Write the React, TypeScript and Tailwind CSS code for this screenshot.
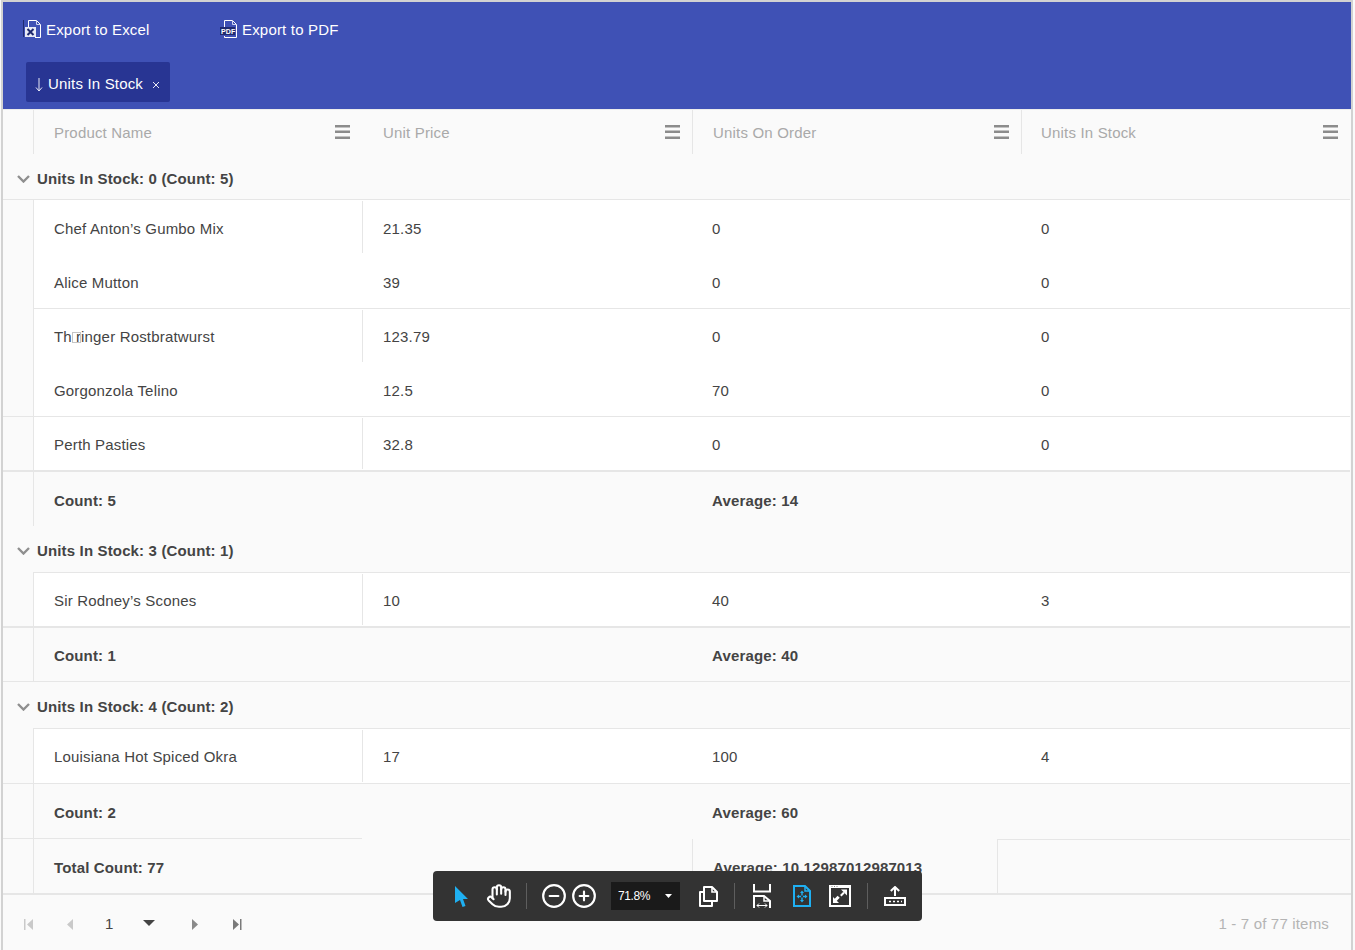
import React from "react";
import { Hand, CircleMinus, CirclePlus } from "lucide-react";

const GRID = "grid grid-cols-[30px_329px_330px_329px_329px] w-[1347px]";

function MenuIcon() {
  return (
    <svg width="15" height="14" viewBox="0 0 15 14" className="shrink-0">
      <rect x="0" y="0" width="15" height="2.5" fill="#8c8c8c" />
      <rect x="0" y="5.5" width="15" height="2.5" fill="#8c8c8c" />
      <rect x="0" y="11.5" width="15" height="2.5" fill="#8c8c8c" />
    </svg>
  );
}

function HeaderCell({ label, border, last }: { label: string; border?: boolean; last?: boolean }) {
  return (
    <div className={`relative flex items-center justify-between h-[44px] ${last ? "pl-[19px]" : "pl-5"} pr-[12px] ${border ? "border-l border-[#e6e6e6]" : "border-l border-transparent"}`}>
      <span className="text-[15px] tracking-[0.18px] text-[#a9a9a9] pt-[2px]">{label}</span>
      <MenuIcon />
    </div>
  );
}

function Header() {
  return (
    <div className="h-[46px] bg-[#fafafa] border-t border-[#ececec]">
      <div className={GRID}>
        <div />
        <HeaderCell label="Product Name" border />
        <HeaderCell label="Unit Price" />
        <HeaderCell label="Units On Order" border />
        <HeaderCell label="Units In Stock" border last />
      </div>
    </div>
  );
}

function Chevron() {
  return (
    <svg width="13" height="8" viewBox="0 0 13 8" className="shrink-0 mb-[2px]">
      <polyline points="1,1 6.5,6.5 12,1" fill="none" stroke="#8f8f8f" strokeWidth="2.4" />
    </svg>
  );
}

function GroupRow({ label, h, line }: { label: string; h: string; line: "full" | "inner" }) {
  return (
    <div className={`${h} flex flex-col bg-[#fafafa]`}>
      <div className="flex-1 flex items-center pl-[14px] gap-[7px] pt-[5px]">
        <Chevron />
        <span className="text-[15px] font-bold tracking-[0.15px] text-[#444444]">{label}</span>
      </div>
      <div className={`h-px bg-[#e6e6e6] ${line === "inner" ? "ml-[30px] w-[1317px]" : "w-[1347px]"}`} />
    </div>
  );
}

type RowProps = {
  name: React.ReactNode;
  price: string;
  order: string;
  stock: string;
  divider?: boolean;
  tight?: boolean;
  h: string;
  bottom?: "none" | "inner" | "full" | "thick";
};

function DataRow({ name, price, order, stock, divider, tight, h, bottom = "none" }: RowProps) {
  const pad = tight ? "pt-[2px]" : "pt-[4px]";
  return (
    <div className={`${h} flex flex-col`}>
      <div className={`${GRID} flex-1 min-h-0 text-[15px] tracking-[0.18px] text-[#444444]`}>
        <div className="bg-[#fafafa]" />
        <div className={`bg-white border-l border-[#e6e6e6] pl-5 ${pad} flex items-center`}>{name}</div>
        <div className="bg-white flex">
          <div className={`my-px flex-1 flex items-center pl-5 ${pad} border-l ${divider ? "border-[#e6e6e6]" : "border-transparent"}`}>{price}</div>
        </div>
        <div className={`bg-white pl-5 ${pad} flex items-center`}>{order}</div>
        <div className={`bg-white pl-5 ${pad} flex items-center`}>{stock}</div>
      </div>
      {bottom === "inner" && <div className="h-px ml-[30px] w-[1317px] bg-[#e6e6e6]" />}
      {bottom === "full" && <div className="h-px w-[1347px] bg-[#e6e6e6]" />}
      {bottom === "thick" && <div className="h-[2px] w-[1347px] bg-[#e6e6e6]" />}
    </div>
  );
}

function SummaryRow({ count, avg, h, bottom }: { count: string; avg: string; h: string; bottom?: "full" | "short" }) {
  return (
    <div className={`${h} flex flex-col bg-[#fafafa]`}>
      <div className={`${GRID} flex-1 min-h-0 text-[15px] font-bold tracking-[0.15px] text-[#444444]`}>
        <div />
        <div className="border-l border-[#e6e6e6] pl-5 pt-[4px] flex items-center">{count}</div>
        <div />
        <div className="pl-5 pt-[4px] flex items-center">{avg}</div>
        <div />
      </div>
      {bottom === "full" && <div className="h-px w-[1347px] bg-[#e6e6e6]" />}
      {bottom === "short" && <div className="h-px w-[359px] bg-[#e6e6e6]" />}
    </div>
  );
}

function TotalRow() {
  return (
    <div className="h-[54px] bg-[#fafafa]">
      <div className={`${GRID} h-full text-[15px] font-bold tracking-[0.15px] text-[#444444]`}>
        <div />
        <div className="border-l border-[#e6e6e6] pl-5 pt-[4px] flex items-center">Total Count: 77</div>
        <div />
        <div className="col-span-2 flex">
          <div className="w-[305px] border-l border-[#e6e6e6] pl-5 pt-[4px] flex items-center">Average: 10.12987012987013</div>
          <div className="flex-1 border-l border-t border-[#e6e6e6]" />
        </div>
      </div>
    </div>
  );
}

function ExcelIcon() {
  return (
    <svg width="19" height="19" viewBox="0 0 19 19" className="shrink-0 -mt-[2px]">
      <path d="M0.5 0V17" stroke="#1f2a70" strokeWidth="1" />
      <path d="M5.5 7V0.5H13.5L17.5 4.5V17.5H12" fill="none" stroke="#ffffff" strokeWidth="1" />
      <path d="M13.5 0.5V4.5H17.5" fill="none" stroke="#cfd4ee" strokeWidth="1" />
      <rect x="2" y="7" width="11" height="10" fill="#e8eaf6" />
      <path d="M4.5 9L10.5 15M10.5 9L4.5 15" stroke="#1f2a70" strokeWidth="2" />
    </svg>
  );
}

function PdfIcon() {
  return (
    <svg width="18" height="19" viewBox="0 0 18 19" className="shrink-0 -mt-[2px]">
      <path d="M4.5 7V0.5H12.5L16.5 4.5V17.5H4.5V16" fill="none" stroke="#ffffff" strokeWidth="1" />
      <path d="M12.5 0.5V4.5H16.5" fill="none" stroke="#cfd4ee" strokeWidth="1" />
      <rect x="0" y="7" width="15" height="8" fill="#1f2a70" />
      <text x="1" y="14" fontSize="7" fontWeight="700" fill="#ffffff" fontFamily="Liberation Sans, sans-serif">PDF</text>
    </svg>
  );
}

function TopBar() {
  return (
    <div className="h-[107px] bg-[#3f51b5] text-white text-[15px] tracking-[0.18px]">
      <div className="h-[54px] flex items-center pt-[2px]">
        <div className="flex items-center gap-[4px] ml-[20px] w-[197px]">
          <ExcelIcon />
          <span>Export to Excel</span>
        </div>
        <div className="flex items-center gap-[4px]">
          <PdfIcon />
          <span>Export to PDF</span>
        </div>
      </div>
      <div className="mt-[6px] ml-[23px] w-[144px] h-[40px] rounded-[2px] bg-[#283593] flex items-center pl-[9px] pt-[4px]">
        <svg width="8" height="14" viewBox="0 0 8 14" className="shrink-0 mt-[2px]">
          <path d="M4 0V13M1 9.5L4 13L7 9.5" fill="none" stroke="#e8eaf6" strokeWidth="1" />
        </svg>
        <span className="ml-[5px]">Units In Stock</span>
        <svg width="8" height="8" viewBox="0 0 8 8" className="ml-[9px] mt-[1px]">
          <path d="M1 1L7 7M7 1L1 7" stroke="#e8eaf6" strokeWidth="1" />
        </svg>
      </div>
    </div>
  );
}

function Tri({ dir, color }: { dir: "l" | "r"; color: string }) {
  return (
    <svg width="6" height="11" viewBox="0 0 6 11" className="shrink-0">
      <polygon points={dir === "l" ? "6,0 6,11 0,5.5" : "0,0 0,11 6,5.5"} fill={color} />
    </svg>
  );
}

function Footer() {
  return (
    <div className="h-[55px] bg-[#fafafa] flex items-center pt-[3px] text-[15px]">
      <svg width="9" height="11" viewBox="0 0 9 11" className="ml-[21px] shrink-0">
        <rect x="0" y="0" width="1.5" height="11" fill="#c9c9c9" />
        <polygon points="9,0 9,11 3,5.5" fill="#c9c9c9" />
      </svg>
      <div className="ml-[34px]"><Tri dir="l" color="#c9c9c9" /></div>
      <span className="ml-[32px] w-[7px] text-[#444444] text-[15px]">1</span>
      <svg width="12" height="6" viewBox="0 0 12 6" className="ml-[31px] mb-[3px] shrink-0">
        <polygon points="0,0 12,0 6,6" fill="#444444" />
      </svg>
      <div className="ml-[37px]"><Tri dir="r" color="#8a8a8a" /></div>
      <svg width="9" height="11" viewBox="0 0 9 11" className="ml-[35px] shrink-0">
        <polygon points="0,0 0,11 6,5.5" fill="#7a7a7a" />
        <rect x="7" y="0" width="1.5" height="11" fill="#7a7a7a" />
      </svg>
      <span className="ml-auto mr-[22px] tracking-[0.18px] text-[#b4b4b4]">1 - 7 of 77 items</span>
    </div>
  );
}

function Divider({ ml }: { ml: string }) {
  return <div className={`${ml} w-px h-[26px] bg-[#5e5e5e] shrink-0`} />;
}

function PdfToolbar() {
  return (
    <div className="absolute left-[433px] top-[871px] w-[489px] h-[50px] rounded-[4px] bg-[#333333] flex items-center">
      <svg width="14" height="21" viewBox="0 0 14 21" className="ml-[21px] shrink-0">
        <polygon points="1,0 14,13 9,13 11.5,20 8.5,21 6,14 1,17" fill="#1fb0f2" />
      </svg>
      <Hand size={26} color="#ffffff" strokeWidth={1.9} className="ml-[18px] shrink-0" />
      <Divider ml="ml-[14px]" />
      <CircleMinus size={26} color="#ffffff" strokeWidth={2} className="ml-[14px] shrink-0" />
      <CirclePlus size={26} color="#ffffff" strokeWidth={2} className="ml-[4px] shrink-0" />
      <div className="ml-[14px] w-[69px] h-[28px] bg-[#1a1a1a] flex items-center pl-[7px] shrink-0">
        <span className="text-[12px] tracking-[-0.4px] text-white w-[47px]">71.8%</span>
        <svg width="7" height="4" viewBox="0 0 7 4">
          <polygon points="0,0 7,0 3.5,4" fill="#ffffff" />
        </svg>
      </div>
      <svg width="19" height="21" viewBox="0 0 19 21" className="ml-[19px] shrink-0">
        <path d="M5 15V1H13L18 6V15Z" fill="none" stroke="#ffffff" strokeWidth="2" strokeLinejoin="round" />
        <path d="M13 1V6H18" fill="none" stroke="#ffffff" strokeWidth="1.6" />
        <path d="M5 6H1V20H13V15" fill="none" stroke="#ffffff" strokeWidth="2" strokeLinejoin="round" />
      </svg>
      <Divider ml="ml-[16px]" />
      <svg width="18" height="24" viewBox="0 0 18 24" className="ml-[18px] shrink-0">
        <path d="M1 0V7.5H17V0" fill="none" stroke="#ffffff" strokeWidth="2" />
        <path d="M1 24V12H11L17 17V24" fill="none" stroke="#ffffff" strokeWidth="2" />
        <path d="M11 12V17H17" fill="none" stroke="#ffffff" strokeWidth="1.5" />
        <path d="M4 21.5H14M6 19.5L4 21.5L6 23.5M12 19.5L14 21.5L12 23.5" fill="none" stroke="#ffffff" strokeWidth="1" />
      </svg>
      <svg width="18" height="22" viewBox="0 0 18 22" className="ml-[22px] shrink-0">
        <path d="M1 1H12L17 6V21H1Z" fill="none" stroke="#1fb0f2" strokeWidth="2" />
        <path d="M12 1V6H17" fill="none" stroke="#1fb0f2" strokeWidth="1.5" />
        <path d="M9 7V10.5M9 12.5V16M5 11.5H8M10 11.5H13" fill="none" stroke="#1fb0f2" strokeWidth="1.4" />
        <path d="M7 8L9 5.5L11 8ZM7 15L9 17.5L11 15ZM6 9.5L3.5 11.5L6 13.5ZM12 9.5L14.5 11.5L12 13.5Z" fill="#1fb0f2" />
      </svg>
      <svg width="22" height="22" viewBox="0 0 22 22" className="ml-[18px] shrink-0">
        <rect x="1" y="1.5" width="20" height="19.5" fill="none" stroke="#ffffff" strokeWidth="2" />
        <rect x="0" y="0" width="22" height="3" fill="#ffffff" />
        <path d="M2.5 1.5H3.5M5 1.5H6M7.5 1.5H8.5" stroke="#8a8a8a" strokeWidth="1" />
        <polygon points="12,4.5 18,4.5 18,10.5" fill="#ffffff" />
        <path d="M15 7.5L11.8 10.7" stroke="#ffffff" strokeWidth="2" />
        <polygon points="4,12 4,18 10,18" fill="#ffffff" />
        <path d="M6 15.5L9.7 11.8" stroke="#ffffff" strokeWidth="3" />
      </svg>
      <Divider ml="ml-[16px]" />
      <svg width="22" height="20" viewBox="0 0 22 20" className="ml-[16px] shrink-0">
        <path d="M11 10V1.5M6.8 5L11 1L15.2 5" fill="none" stroke="#ffffff" strokeWidth="2" />
        <rect x="1" y="12" width="20" height="7" fill="none" stroke="#ffffff" strokeWidth="2" />
        <path d="M5 15.5H7M9 15.5H11M13 15.5H15M17 15.5H18" stroke="#ffffff" strokeWidth="1.6" />
      </svg>
    </div>
  );
}

export default function App() {
  return (
    <div className="relative w-[1355px] h-[950px] overflow-hidden bg-[#fafafa] font-['Liberation_Sans',Arial,sans-serif]">
      <div className="ml-px w-[1352px] h-[950px] border-l-2 border-r-2 border-t-2 border-[#d2d2d2] bg-[#fafafa]">
        <TopBar />
        <Header />
        <GroupRow label="Units In Stock: 0 (Count: 5)" h="h-[45px]" line="full" />
        <DataRow h="h-[54px]" divider name="Chef Anton’s Gumbo Mix" price="21.35" order="0" stock="0" />
        <DataRow h="h-[55px]" bottom="inner" name="Alice Mutton" price="39" order="0" stock="0" />
        <DataRow
          h="h-[54px]"
          divider
          tight
          name={
            <span>
              Th
              <span className="relative inline-block w-[4px] h-0">
                <span className="absolute left-0 -bottom-[1px] w-[9px] h-[11px] border border-[#c4c4c4]" />
              </span>
              ringer Rostbratwurst
            </span>
          }
          price="123.79"
          order="0"
          stock="0"
        />
        <DataRow h="h-[54px]" bottom="full" name="Gorgonzola Telino" price="12.5" order="70" stock="0" />
        <DataRow h="h-[55px]" divider bottom="thick" name="Perth Pasties" price="32.8" order="0" stock="0" />
        <SummaryRow h="h-[54px]" count="Count: 5" avg="Average: 14" />
        <GroupRow label="Units In Stock: 3 (Count: 1)" h="h-[47px]" line="inner" />
        <DataRow h="h-[55px]" divider bottom="thick" name="Sir Rodney’s Scones" price="10" order="40" stock="3" />
        <SummaryRow h="h-[54px]" bottom="full" count="Count: 1" avg="Average: 40" />
        <GroupRow label="Units In Stock: 4 (Count: 2)" h="h-[47px]" line="inner" />
        <DataRow h="h-[55px]" divider tight bottom="full" name="Louisiana Hot Spiced Okra" price="17" order="100" stock="4" />
        <SummaryRow h="h-[55px]" bottom="short" count="Count: 2" avg="Average: 60" />
        <TotalRow />
        <div className="h-[2px] bg-[#e6e6e6]" />
        <Footer />
      </div>
      <PdfToolbar />
    </div>
  );
}
